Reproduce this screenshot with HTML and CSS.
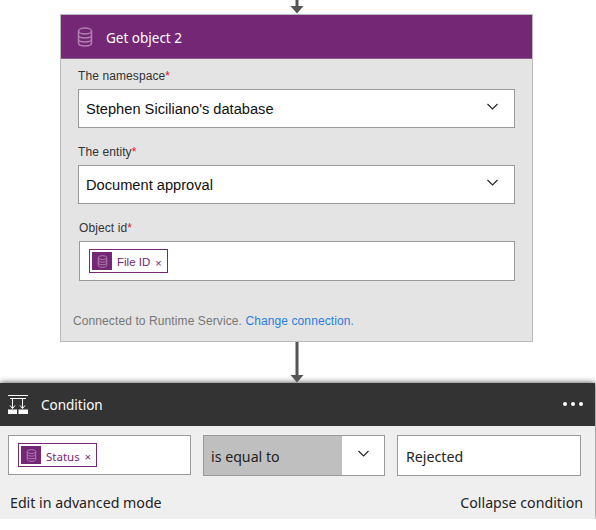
FILE: index.html
```html
<!DOCTYPE html>
<html lang="en">
<head>
    <meta charset="UTF-8">
    <title>Get object and condition</title>
    <link rel="stylesheet" href="styles.css">
</head>

<body>
<!-- Incoming arrow -->
<svg class="arrow arrow-top" width="16" height="14" viewBox="0 0 16 14">
    <path d="M6.5 0h3v6h5L8 13.5 1.500 6h5z" fill="#555"/>
</svg>

<!-- Get object card -->
<div class="card">
    <div class="card-header">
        <svg class="db-icon" width="16" height="20" viewBox="0 0 16 20">
            <ellipse cx="8" cy="4" rx="6.500" ry="3"/>
            <path d="M1.500 4v12c0 1.700 2.900 3 6.500 3s6.500-1.300 6.500-3V4M1.500 8c0 1.700 2.900 3 6.500 3s6.500-1.300 6.500-3M1.500 12c0 1.700 2.900 3 6.500 3s6.500-1.300 6.500-3"/>
        </svg>
        <span class="card-title">Get object 2</span>
    </div>
    <div class="card-body">
        <div class="field">
            <label>The namespace<span class="req">*</span></label>
            <div class="select-box">
                <span>Stephen Siciliano's database</span>
                <svg class="chevron" width="11" height="7" viewBox="0 0 11 7"><path d="M.5 1l5 5 5-5"/></svg>
            </div>
        </div>
        <div class="field">
            <label>The entity<span class="req">*</span></label>
            <div class="select-box">
                <span>Document approval</span>
                <svg class="chevron" width="11" height="7" viewBox="0 0 11 7"><path d="M.5 1l5 5 5-5"/></svg>
            </div>
        </div>
        <div class="field field-id">
            <label>Object id<span class="req">*</span></label>
            <div class="token-box">
                <div class="token">
                    <span class="token-icon">
                        <svg class="db-icon" width="11" height="13" viewBox="0 0 16 20">
                            <ellipse cx="8" cy="4" rx="6.500" ry="3"/>
                            <path d="M1.500 4v12c0 1.700 2.900 3 6.500 3s6.500-1.300 6.500-3V4M1.500 8c0 1.700 2.900 3 6.500 3s6.500-1.300 6.500-3M1.500 12c0 1.700 2.900 3 6.500 3s6.500-1.300 6.500-3"/>
                        </svg>
                    </span>
                    <span class="token-text">File ID</span>
                    <span class="token-x">×</span>
                </div>
            </div>
        </div>
        <p class="connection">Connected to Runtime Service. <a href="#">Change connection.</a></p>
    </div>
</div>

<!-- Arrow into condition -->
<svg class="arrow arrow-mid" width="16" height="41" viewBox="0 0 16 41">
    <path d="M6.500 0h3v33h5L8 40.500 1.500 33h5z" fill="#555"/>
</svg>

<!-- Condition -->
<div class="condition">
    <div class="cond-header">
        <svg class="cond-icon" width="20" height="19" viewBox="0 0 20 19">
            <path d="M0 .5h20M2 3.500h16M4.500 3.500v10M14.500 3.500v10M2 10.500l2.500 3 2.500-3M12 10.500l2.500 3 2.500-3" fill="none" stroke="#fff"/>
            <path d="M0 14.500h9V19H0zM10.500 14.500H20V19h-9.500z" fill="#fff"/>
        </svg>
        <span class="cond-title">Condition</span>
        <span class="dots"><i></i><i></i><i></i></span>
    </div>
    <div class="cond-body">
        <div class="cond-row">
            <div class="cond-left">
                <div class="token">
                    <span class="token-icon">
                        <svg class="db-icon" width="11" height="13" viewBox="0 0 16 20">
                            <ellipse cx="8" cy="4" rx="6.500" ry="3"/>
                            <path d="M1.500 4v12c0 1.700 2.900 3 6.500 3s6.500-1.300 6.500-3V4M1.500 8c0 1.700 2.900 3 6.500 3s6.500-1.300 6.500-3M1.500 12c0 1.700 2.900 3 6.500 3s6.500-1.300 6.500-3"/>
                        </svg>
                    </span>
                    <span class="token-text">Status</span>
                    <span class="token-x">×</span>
                </div>
            </div>
            <div class="cond-select">
                <span class="cond-value">is equal to</span>
                <span class="cond-arrow">
                    <svg class="chevron" width="11" height="7" viewBox="0 0 11 7"><path d="M.5 1l5 5 5-5"/></svg>
                </span>
            </div>
            <div class="cond-right">Rejected</div>
        </div>
        <div class="cond-links">
            <span>Edit in advanced mode</span>
            <span>Collapse condition</span>
        </div>
    </div>
</div>
</body>
</html>
```

FILE: styles.css
```css
body {
    margin: 0;
    background-color: #fff;
    font-family: "Liberation Sans", Arial, sans-serif;
    overflow: hidden;
}
.arrow {
    display: block;
}
.arrow-top {
    margin-left: 289px;
}
.arrow-mid {
    margin-left: 289px;
    position: relative;
    z-index: 2;
}
.card {
    width: 471px;
    height: 326px;
    margin-left: 60px;
    border: 1px solid #bbb;
    background: #e4e4e4;
}
.card-header {
    height: 44px;
    background-color: #742774;
    border-bottom: 1px solid #8a5c8a;
    box-sizing: border-box;
    display: flex;
    align-items: center;
    padding-left: 16px;
    color: #fff;
}
.card-title {
    margin-left: 13px;
    padding-top: 2px;
    font-family: "Noto Sans", sans-serif;
    font-size: 13.500px;
}
.db-icon {
    flex: none;
}
.db-icon ellipse, .db-icon path {
    fill: none;
    stroke: #b07fb0;
    stroke-width: 1.500;
}
.card-body {
    padding: 9px 17px 0 17px;
}
.field {
    margin-bottom: 16px;
}
.field label {
    display: block;
    font-size: 12px;
    letter-spacing: 0.1px;
    line-height: 14px;
    padding-top: 1px;
    margin-bottom: 6px;
    color: #333;
}
.req {
    color: #e81123;
}
.select-box {
    height: 39px;
    box-sizing: border-box;
    border: 1px solid #999;
    background: #fff;
    display: flex;
    align-items: center;
    justify-content: space-between;
    padding: 1px 16px 0 7px;
    font-size: 14.650px;
    color: #111;
}
.select-box .chevron {
    margin-bottom: 6px;
}
.chevron {
    flex: none;
}
.chevron path {
    fill: none;
    stroke: #222;
    stroke-width: 1.100;
}
.field-id {
    margin-left: 1px;
}
.token-box {
    height: 40px;
    box-sizing: border-box;
    border: 1px solid #999;
    background: #fff;
    padding: 7px 9px;
}
.token {
    display: inline-flex;
    align-items: center;
    height: 24px;
    box-sizing: border-box;
    border: 1px solid #742774;
    padding: 2px;
    background: #fff;
}
.token-icon {
    width: 20px;
    height: 18px;
    background-color: #742774;
    display: flex;
    align-items: center;
    justify-content: center;
}
.token-text {
    margin-left: 5px;
    padding-top: 2px;
    font-size: 11.500px;
    color: #742774;
}
.token-x {
    margin: 3px 3px 0 5px;
    font-size: 11px;
    color: #742774;
}
.connection {
    margin: 33px 0 0 -5px;
    font-size: 12px;
    letter-spacing: 0.1px;
    color: #777;
}
.connection a {
    color: #2a7de1;
    text-decoration: none;
}
.condition {
    width: 595px;
    height: 136px;
    background: #f0eff0;
    box-shadow: 0 0 6px rgba(0, 0, 0, 0.75);
}
.cond-header {
    height: 43px;
    background: #333;
    display: flex;
    align-items: center;
    padding: 0 12px 0 8px;
    color: #fff;
}
.cond-title {
    margin-left: 13px;
    font-family: "Noto Sans", sans-serif;
    font-size: 13.500px;
}
.cond-icon {
    flex: none;
}
.dots {
    margin-left: auto;
    display: flex;
    gap: 4px;
    margin-bottom: 2px;
}
.dots i {
    width: 4px;
    height: 4px;
    border-radius: 50%;
    background: #fff;
}
.cond-body {
    padding: 9px 12px 0 8px;
    font-family: "Noto Sans", sans-serif;
    font-size: 14.200px;
    color: #222;
}
.cond-row {
    display: flex;
    align-items: flex-start;
}
.cond-left {
    width: 183px;
    height: 40px;
    box-sizing: border-box;
    border: 1px solid #999;
    background: #fff;
    padding: 7px 9px;
}
.cond-select {
    width: 182px;
    height: 41px;
    margin-left: 12px;
    box-sizing: border-box;
    border: 1px solid #999;
    background: #fff;
    display: flex;
}
.cond-value {
    width: 138px;
    background: #bfbfbf;
    padding-left: 7px;
    box-sizing: border-box;
    line-height: 41px;
}
.cond-arrow {
    flex: 1;
    display: flex;
    align-items: center;
    justify-content: center;
    padding-bottom: 4px;
}
.cond-right {
    width: 184px;
    height: 41px;
    margin-left: 12px;
    box-sizing: border-box;
    border: 1px solid #999;
    background: #fff;
    padding-left: 8px;
    line-height: 41px;
}
.cond-links {
    display: flex;
    justify-content: space-between;
    margin: 17px 0 0 2px;
    line-height: 20px;
}
```
